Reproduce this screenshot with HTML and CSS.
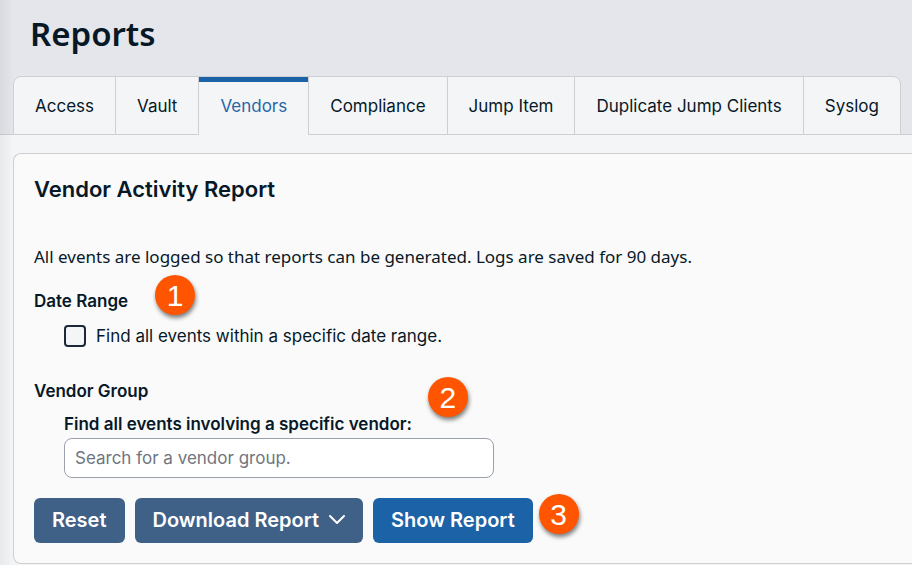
FILE: index.html
```html
<!DOCTYPE html>
<html lang="en">
<head>
  <meta charset="UTF-8" />
  <meta name="viewport" content="width=device-width, initial-scale=1.0" />
  <title>Reports</title>
  <link rel="stylesheet" href="styles.css">
</head>
<body>
  <header class="page-header">
    <h1>Reports</h1>
    <nav class="tabs">
      <a href="#access">Access</a>
      <a href="#vault">Vault</a>
      <a href="#vendors" class="active" aria-current="page">Vendors</a>
      <a href="#compliance">Compliance</a>
      <a href="#jump-item">Jump Item</a>
      <a href="#duplicates">Duplicate Jump Clients</a>
      <a href="#syslog">Syslog</a>
    </nav>
  </header>

  <main>
    <form class="panel">
      <h2>Vendor Activity Report</h2>
      <p class="intro">All events are logged so that reports can be generated. Logs are saved for 90 days.</p>

      <section class="date-range">
        <h3 class="marked">Date Range <span class="badge badge-date">1</span></h3>
        <div class="check-row">
          <input type="checkbox" id="use-range">
          <label for="use-range">Find all events within a specific date range.</label>
        </div>
      </section>

      <section class="vendor-group">
        <h3>Vendor Group</h3>
        <div class="field">
          <label class="marked" for="vendor">Find all events involving a specific vendor: <span class="badge badge-vendor">2</span></label>
          <input type="text" id="vendor" placeholder="Search for a vendor group.">
        </div>
      </section>

      <div class="actions marked">
        <button type="reset">Reset</button>
        <button type="button">Download Report
          <svg width="16" height="10" viewBox="0 0 16 10" aria-hidden="true"><path d="M1 1l7 7 7-7" fill="none" stroke="currentColor" stroke-width="2" stroke-linecap="round" stroke-linejoin="round"/></svg>
        </button>
        <button type="submit" class="primary">Show Report</button>
        <span class="badge badge-actions">3</span>
      </div>
    </form>
  </main>
</body>
</html>
```
FILE: styles.css
```css
* {
  box-sizing: border-box;
}
body {
  margin: 0;
  background-color: #f4f5f7;
  color: #071827;
  font-family: Inter, sans-serif;
  font-size: 17px;
  line-height: 24px;
  overflow-x: hidden;
}
body::before {
  content: "";
  position: absolute;
  top: 0;
  bottom: 0;
  left: 0;
  width: 14px;
  background: linear-gradient(to right, rgba(0, 0, 0, 0.05), transparent);
}
h1, h2, h3, p {
  margin: 0;
}
.page-header {
  background-color: #e4e6eb;
  border-bottom: 1px solid #cdcfd3;
  padding: 12px 0 0 13px;
}
h1 {
  font-family: "Noto Sans", sans-serif;
  font-size: 33px;
  font-weight: 600;
  line-height: 44px;
  padding-left: 17px;
  margin-bottom: 20px;
}
.tabs {
  display: flex;
  width: max-content;
  margin-bottom: -1px;
  border: 1px solid #cdcfd3;
  border-radius: 8px 8px 0 0;
  background-color: #f4f5f7;
}
.tabs a {
  padding: 17px 21px 16px;
  color: inherit;
  text-decoration: none;
}
.tabs a + a {
  border-left: 1px solid #cdcfd3;
}
.tabs a.active {
  color: #2a66a5;
  margin-bottom: -1px;
  background-color: #f4f5f7;
  box-shadow: inset 0 5px #1c62a6;
}
main {
  padding: 18px 0 1px 13px;
}
.panel {
  padding: 21px 20px 20px;
  background-color: #fafafa;
  border: 1px solid #cdcfd3;
  border-right: 0;
  border-radius: 8px 0 0 8px;
}
h2 {
  font-size: 22px;
  font-weight: 600;
  line-height: 28px;
}
.intro {
  margin-top: 42px;
  font-family: "Noto Sans", sans-serif;
}
h3, .field label {
  font-size: 17px;
  font-weight: 600;
}
.date-range {
  margin-top: 20px;
}
.vendor-group {
  margin-top: 31px;
}
.check-row {
  display: flex;
  align-items: center;
  gap: 10px;
  margin: 11px 0 0 30px;
}
.check-row input {
  appearance: none;
  width: 22px;
  height: 22px;
  margin: 0;
  border: 2px solid #1d2939;
  border-radius: 4px;
  background-color: #f4f5f7;
}
.field {
  display: flex;
  flex-direction: column;
  align-items: flex-start;
  gap: 2px;
  margin: 9px 0 0 30px;
}
.field input {
  width: 430px;
  max-width: 100%;
  height: 40px;
  padding: 0 10px;
  border: 1px solid #9aa1ad;
  border-radius: 8px;
  background-color: #fff;
  font: inherit;
}
.field input::placeholder {
  color: #6f7580;
}
.actions {
  display: flex;
  gap: 10px;
  margin-top: 20px;
}
button {
  display: flex;
  align-items: center;
  gap: 10px;
  height: 45px;
  padding: 0 18px 1px;
  border: 0;
  border-radius: 6px;
  background-color: #3f6187;
  color: #fff;
  font: 600 20px/24px Inter, sans-serif;
}
button.primary {
  background-color: #1c62a6;
}
.marked {
  position: relative;
  width: max-content;
}
.badge {
  position: absolute;
  left: 100%;
  width: 40px;
  height: 40px;
  border-radius: 50%;
  background-color: #ff5500;
  box-shadow: 1px 3px 4px rgba(0, 0, 0, 0.5);
  color: #fff;
  font: 30px/42px "Liberation Sans", sans-serif;
  text-align: center;
}
.badge-date {
  top: -14px;
  margin-left: 27px;
}
.badge-vendor {
  top: -35px;
  margin-left: 16px;
}
.badge-actions {
  top: -4px;
  margin-left: 6px;
}
```
